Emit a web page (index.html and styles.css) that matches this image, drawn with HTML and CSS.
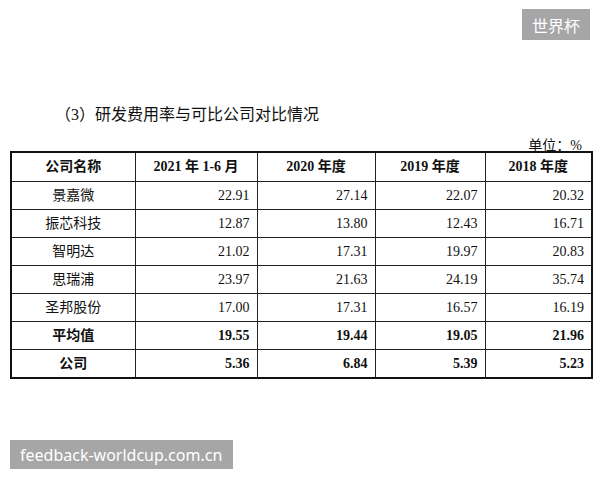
FILE: index.html
```html
<!DOCTYPE html>
<html lang="zh-CN">
<head>
<meta charset="utf-8">
<link rel="stylesheet" href="styles.css">
</head>
<body>
<div class="top"><span class="badge">世界杯</span></div>
<h1 class="title">（3）研发费用率与可比公司对比情况</h1>
<div class="unit">单位：%</div>
<table class="data">
  <colgroup>
    <col class="c1"><col class="c2"><col class="c3"><col class="c4"><col class="c5">
  </colgroup>
  <thead>
    <tr><th>公司名称</th><th>2021 年 1-6 月</th><th>2020 年度</th><th>2019 年度</th><th>2018 年度</th></tr>
  </thead>
  <tbody>
    <tr><td class="name">景嘉微</td><td>22.91</td><td>27.14</td><td>22.07</td><td>20.32</td></tr>
    <tr><td class="name">振芯科技</td><td>12.87</td><td>13.80</td><td>12.43</td><td>16.71</td></tr>
    <tr><td class="name">智明达</td><td>21.02</td><td>17.31</td><td>19.97</td><td>20.83</td></tr>
    <tr><td class="name">思瑞浦</td><td>23.97</td><td>21.63</td><td>24.19</td><td>35.74</td></tr>
    <tr><td class="name">圣邦股份</td><td>17.00</td><td>17.31</td><td>16.57</td><td>16.19</td></tr>
    <tr class="bold"><td class="name">平均值</td><td>19.55</td><td>19.44</td><td>19.05</td><td>21.96</td></tr>
    <tr class="bold"><td class="name">公司</td><td>5.36</td><td>6.84</td><td>5.39</td><td>5.23</td></tr>
  </tbody>
</table>
<div class="footer"><span class="mark">feedback-worldcup.com.cn</span></div>
</body>
</html>
```
FILE: styles.css
```css
html, body {
  margin: 0;
  padding: 0;
  background: #fff;
  color: #111;
  font-family: "Liberation Serif", "Noto Sans CJK SC", serif;
}
.top {
  display: flex;
  justify-content: flex-end;
  padding: 9px 10px 0 0;
}
.badge {
  display: flex;
  align-items: center;
  justify-content: center;
  width: 68px;
  height: 31px;
  background: #a6a6a6;
  color: #fff;
  font-family: "Noto Sans CJK SC", sans-serif;
  font-size: 16px;
}
.title {
  margin: 63px 0 0 0;
  padding-left: 55px;
  font-size: 16px;
  font-weight: normal;
  line-height: 24px;
  font-family: "Liberation Serif", "Noto Sans CJK SC", serif;
}
.unit {
  margin-top: 9px;
  padding-right: 18px;
  text-align: right;
  font-size: 14px;
  line-height: 20px;
}
.data {
  margin-left: 10px;
  margin-top: -5px;
  width: 581px;
  border-collapse: collapse;
  border: 2px solid #111;
  table-layout: fixed;
  font-size: 14px;
}
.c1 { width: 124px; }
.c2 { width: 122px; }
.c3 { width: 118px; }
.c4 { width: 110px; }
.c5 { width: 107px; }
.data th, .data td {
  border: 1px solid #222;
  padding: 0 7px 0 0;
  height: 27px;
  line-height: 20px;
  text-align: right;
}
.data th {
  height: 28px;
  text-align: center;
  padding: 0;
  font-weight: bold;
}
.data td.name {
  text-align: center;
  padding: 0;
}
.data tr.bold td {
  font-weight: bold;
}
.footer {
  margin-top: 61px;
  padding-left: 10px;
  display: flex;
}
.mark {
  display: flex;
  align-items: center;
  height: 29px;
  width: 223px;
  padding-left: 10px;
  box-sizing: border-box;
  background: #a6a6a6;
  color: #fff;
  font-family: "Noto Sans", sans-serif;
  font-size: 16px;
}
```
